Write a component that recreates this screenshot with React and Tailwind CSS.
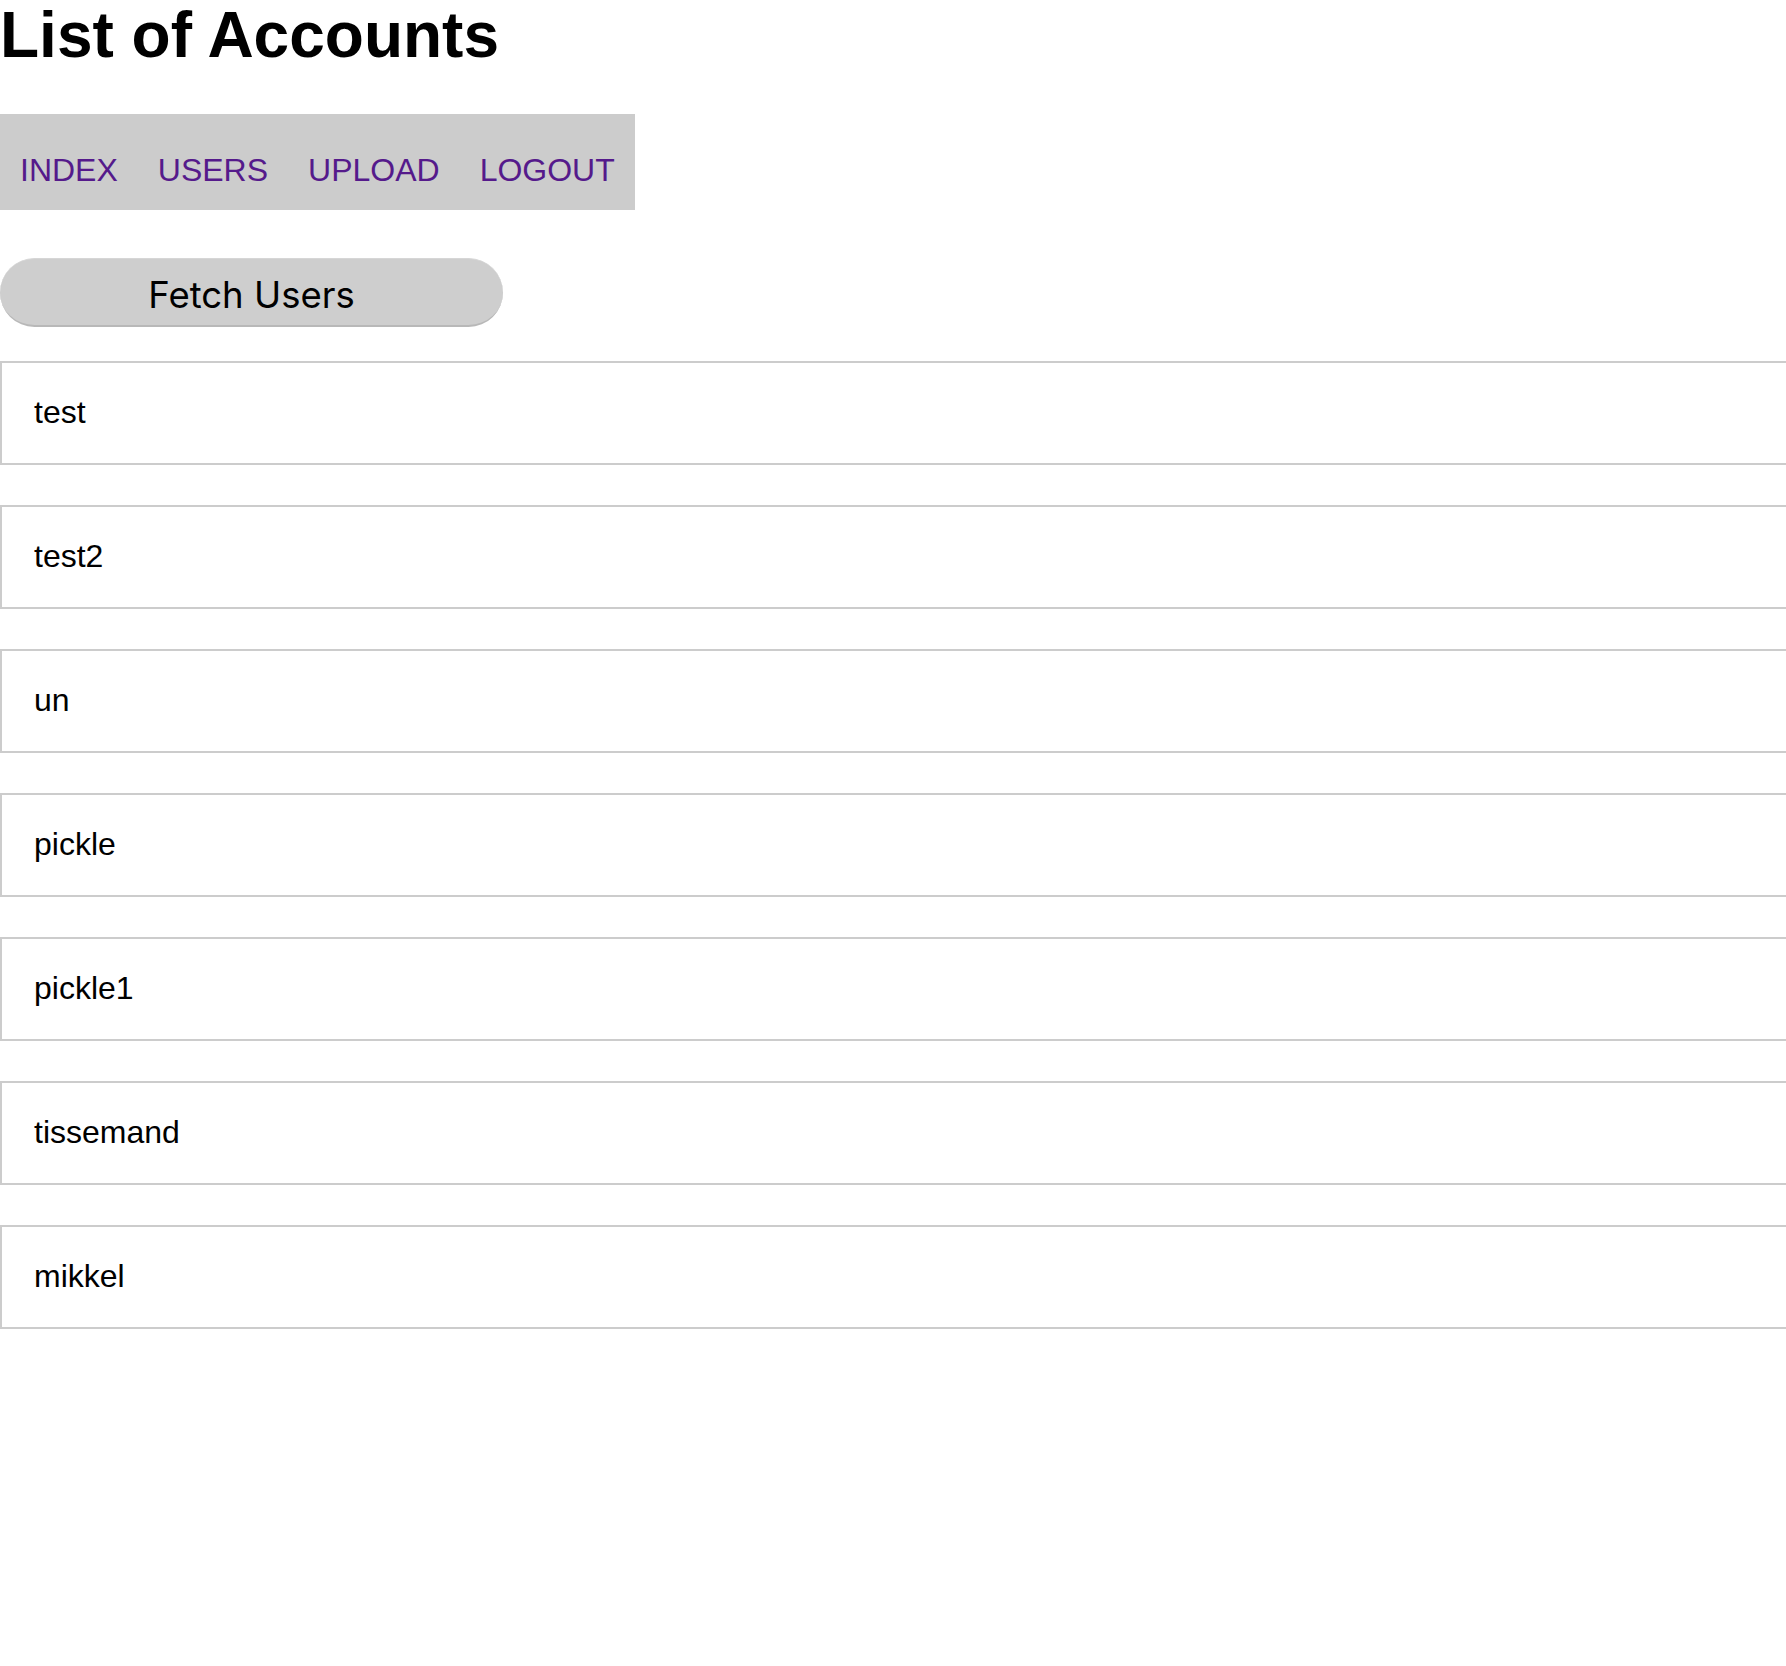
import React from "react";

const users = ["test", "test2", "un", "pickle", "pickle1", "tissemand", "mikkel"];
const links = ["INDEX", "USERS", "UPLOAD", "LOGOUT"];

export default function App() {
  return (
    <main className="min-h-[1666px] bg-white font-['Liberation_Sans',Arial,sans-serif] text-black">
      <h1 className="text-[64px] font-bold leading-[70px]">List of Accounts</h1>

      {/* nav bar */}
      <nav className="mt-[44px] flex w-fit bg-[#cccccc] pt-[38px] pb-[21px]">
        {links.map((l) => (
          <a key={l} href="#" className="px-[20px] text-[32px] leading-[36.8px] text-[#551a8b]">
            {l}
          </a>
        ))}
      </nav>

      <button className="mt-[48px] flex h-[69px] w-[503px] items-center justify-center rounded-full border-t border-b-2 border-t-[#d6d6d6] border-b-[#b8b8b8] bg-[#cecece] pt-[6px] font-['Inter','Liberation_Sans',sans-serif] text-[36.5px] leading-none text-black">
        Fetch Users
      </button>

      {/* user rows */}
      <ul className="mt-[34px] flex flex-col gap-[40px]">
        {users.map((u) => (
          <li
            key={u}
            className="border-2 border-r-0 border-[#cccccc] pt-[29px] pb-[31px] pl-[32px] text-[32px] leading-[40px]"
          >
            {u}
          </li>
        ))}
      </ul>
    </main>
  );
}
